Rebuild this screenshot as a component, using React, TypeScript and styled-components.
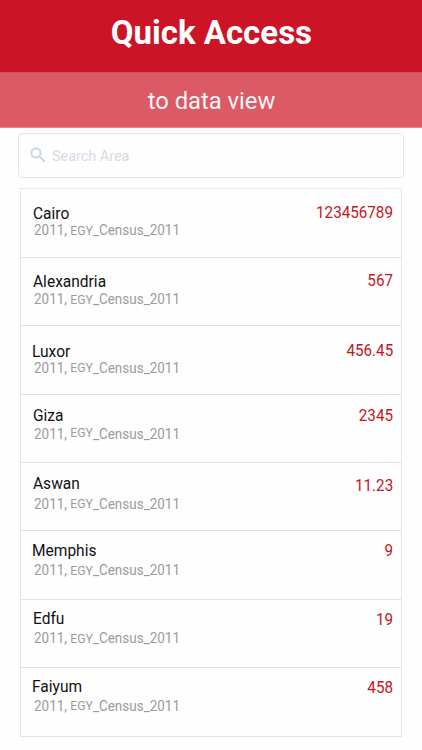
import React from "react";
import styled, { createGlobalStyle } from "styled-components";

const GlobalStyle = createGlobalStyle`
  * { box-sizing: border-box; }
  body { margin: 0; background: #fff; font-family: Roboto, "Liberation Sans", sans-serif; overflow: hidden; }
`;

const Screen = styled.main`
  display: flex;
  flex-direction: column;
  width: 422px;
  height: 750px;
  background: #fefefe;
`;

const TitleBar = styled.header`
  display: flex;
  justify-content: center;
  height: 72px;
  padding-top: 13px;
  background: #cc1427;
`;

const Title = styled.h1`
  margin: 0;
  font-size: 33px;
  font-weight: 700;
  line-height: 40px;
  color: #fff;
  white-space: nowrap;
  transform: translate(0.4px, 0.3px);
`;

const SubtitleBar = styled.div`
  display: flex;
  justify-content: center;
  height: 56px;
  padding-top: 14px;
  background: #db5a66;
  border-top: 1px solid #d84b58;
  border-bottom: 1px solid #ef8188;
`;

const Subtitle = styled.h2`
  margin: 0;
  font-size: 24px;
  font-weight: 400;
  line-height: 28px;
  color: #fff4f5;
  white-space: nowrap;
  transform: scaleX(0.99);
`;

const SearchBox = styled.label`
  display: flex;
  align-items: center;
  width: 386px;
  height: 45px;
  margin: 5px 0 0 18px;
  padding-left: 9px;
  border: 1px solid #e2e7ef;
  border-radius: 4px;
  background: #fefefe;
`;

const SearchIcon = styled.svg`
  width: 20px;
  height: 20px;
  flex: none;
  margin-top: -1px;
  fill: #cdd5de;
  stroke: #cdd5de;
  stroke-width: 0.4;
`;

const SearchInput = styled.input`
  width: 300px;
  margin-left: 4px;
  padding: 0;
  border: 0;
  outline: 0;
  background: transparent;
  font: 400 15px/20px Roboto, "Liberation Sans", sans-serif;
  transform: scaleX(0.96);
  transform-origin: left;
  &::placeholder { color: #d5dbe4; opacity: 1; }
`;

const List = styled.ul`
  display: grid;
  grid-template-rows: repeat(8, 68.4px);
  width: 382px;
  margin: 10.4px 0 0 20px;
  padding: 0;
  list-style: none;
  border: solid #e5e8f0;
  border-width: 1px 1px 0;
`;

const Row = styled.li`
  display: flex;
  justify-content: space-between;
  align-items: flex-start;
  padding: 0 8px 0 12px;
  border-bottom: 1px solid #dfe3ec;
`;

const Place = styled.div<{ $top: number }>`
  display: flex;
  flex-direction: column;
  align-items: flex-start;
  padding-top: ${(p) => p.$top}px;
`;

const Name = styled.span<{ $indent: number }>`
  margin-left: ${(p) => p.$indent}px;
  font-size: 16px;
  line-height: 18px;
  color: #111;
  transform: scaleX(0.97);
  transform-origin: left;
`;

const Source = styled.span<{ $gap: number }>`
  margin: ${(p) => p.$gap}px 0 0 1px;
  font-size: 15px;
  line-height: 16px;
  color: #9b9b9b;
  white-space: nowrap;
  transform: scaleX(0.898);
  transform-origin: left;
`;

const Code = styled.span<{ $raise: number }>`
  display: inline-block;
  font-size: 13.6px;
  line-height: 14px;
  transform: translateY(${(p) => -p.$raise}px);
`;

const Value = styled.span<{ $top: number }>`
  padding-top: ${(p) => p.$top}px;
  font-size: 16px;
  line-height: 18px;
  color: #c4161c;
  transform: scaleX(0.95);
  transform-origin: right;
`;

type Area = {
  name: string;
  value: string;
  top: number;
  indent: number;
  gap: number;
  raise: number;
  valueTop: number;
};

const areas: Area[] = [
  { name: "Cairo", value: "123456789", top: 15.6, indent: -0.5, gap: -0.5, raise: 0, valueTop: 14.6 },
  { name: "Alexandria", value: "567", top: 15.1, indent: 0.4, gap: -0.2, raise: 0.3, valueTop: 14.1 },
  { name: "Luxor", value: "456.45", top: 17.1, indent: -0.6, gap: -0.8, raise: 1, valueTop: 15.8 },
  { name: "Giza", value: "2345", top: 12.1, indent: -0.3, gap: 1.2, raise: 1.8, valueTop: 12.6 },
  { name: "Aswan", value: "11.23", top: 11.6, indent: -0.2, gap: 3, raise: 1, valueTop: 14 },
  { name: "Memphis", value: "9", top: 10.6, indent: -1.5, gap: 1.6, raise: 0, valueTop: 11 },
  { name: "Edfu", value: "19", top: 10.2, indent: -0.1, gap: 1.9, raise: 0, valueTop: 10.8 },
  { name: "Faiyum", value: "458", top: 9.9, indent: -1.3, gap: 1.5, raise: 1.3, valueTop: 10.8 },
];

export default function App() {
  return (
    <>
      <GlobalStyle />
      <Screen>
        <TitleBar>
          <Title>Quick Access</Title>
        </TitleBar>
        <SubtitleBar>
          <Subtitle>to data view</Subtitle>
        </SubtitleBar>
        <SearchBox>
          <SearchIcon viewBox="0 0 24 24" aria-hidden="true">
            <path d="M15.5 14h-.79l-.28-.27A6.47 6.47 0 0 0 16 9.5 6.5 6.5 0 1 0 9.5 16c1.61 0 3.09-.59 4.23-1.57l.27.28v.79l5 4.99L20.49 19l-4.99-5zm-6 0A4.5 4.5 0 1 1 14 9.5 4.49 4.49 0 0 1 9.5 14z" />
          </SearchIcon>
          <SearchInput placeholder="Search Area" aria-label="Search Area" />
        </SearchBox>
        <List>
          {areas.map((area) => (
            <Row key={area.name}>
              <Place $top={area.top}>
                <Name $indent={area.indent}>{area.name}</Name>
                <Source $gap={area.gap}>
                  2011, <Code $raise={area.raise}>EGY</Code>_Census_2011
                </Source>
              </Place>
              <Value $top={area.valueTop}>{area.value}</Value>
            </Row>
          ))}
        </List>
      </Screen>
    </>
  );
}
